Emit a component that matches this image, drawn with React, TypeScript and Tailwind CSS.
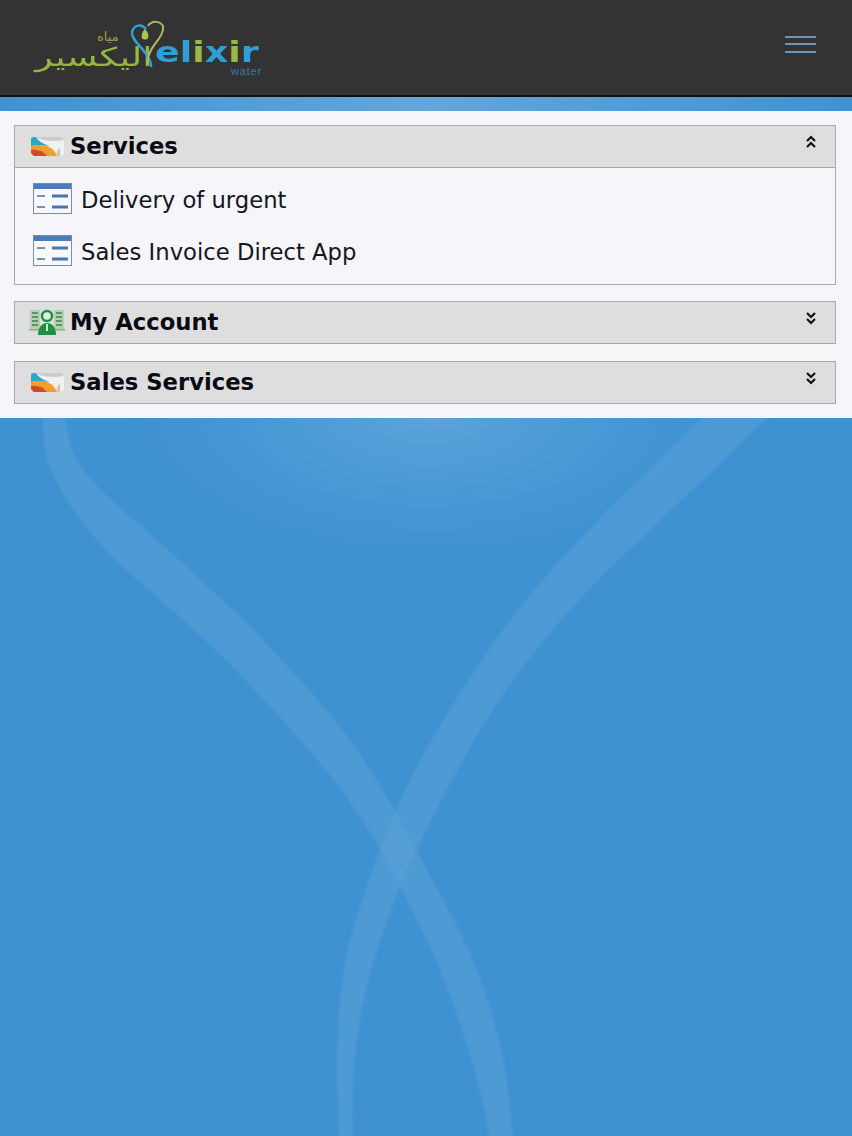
import React from "react";

// smooth closed shape through the two edges of a ribbon: [y, left x, right x]
function ribbonPath(rows: number[][]) {
  const pts = [...rows.map((r) => [r[1], r[0]]), ...[...rows].reverse().map((r) => [r[2], r[0]])];
  let d = `M${pts[0][0]} ${pts[0][1]}`;
  for (let i = 1; i < pts.length - 1; i++) {
    const mx = (pts[i][0] + pts[i + 1][0]) / 2;
    const my = (pts[i][1] + pts[i + 1][1]) / 2;
    d += ` Q${pts[i][0]} ${pts[i][1]} ${mx} ${my}`;
  }
  return d + ` L${pts[pts.length - 1][0]} ${pts[pts.length - 1][1]}Z`;
}

const leftRibbon = [
  [405, 42, 65], [419, 42, 65], [470, 46, 76], [549, 100, 168], [641, 209, 266], [734, 296, 348],
  [803, 353, 391], [873, 394, 429], [966, 440, 478], [1058, 472, 505], [1136, 490, 513], [1200, 498, 520], [1260, 500, 524],
];
const rightRibbon = [
  [405, 716, 780], [419, 701, 766], [503, 614, 679], [595, 527, 581], [688, 462, 505], [780, 408, 451],
  [873, 370, 405], [966, 342, 370], [1058, 336, 353], [1136, 339, 352], [1200, 342, 354], [1260, 344, 356],
];

function Card() {
  return (
    <svg width="34" height="22" viewBox="0 0 34 22">
      <path d="M3 2H32L34 4V19L31 21H5z" fill="#f0f1f2" />
      <path d="M3 2H32L34 5C24 7 14 6 7 3z" fill="#c9cdd0" />
      <path d="M1 4C1 2 3 2 6 2C8 6 13 9 20 11C12 10 5 10 1 11z" fill="#2fa6c8" />
      <path d="M1 11C8 9 16 10 21 13C25 16 26 19 27 21H4L1 18z" fill="#ef9f2e" />
      <path d="M1 15C7 14 13 16 17 21H4L1 18z" fill="#cf4a27" />
      <path d="M27 21C26 17 28 15 30 12V21z" fill="#dcc4a0" />
    </svg>
  );
}

function Person() {
  return (
    <svg width="36" height="28" viewBox="0 0 36 28">
      <rect x="1" y="2" width="10" height="19" fill="#b4d0b2" />
      <rect x="25" y="2" width="10" height="19" fill="#b4d0b2" />
      <path d="M3 5h6M3 9h6M3 13h6M3 17h6M27 5h6M27 9h6M27 13h6M27 17h6" stroke="#5b9565" strokeWidth="2" />
      <rect x="0" y="21" width="36" height="1.5" fill="#86b589" />
      <circle cx="18" cy="8" r="5" fill="#dfeedd" stroke="#1f8f45" strokeWidth="2.5" />
      <path d="M9 27c0-8 4-12 9-12s9 4 9 12z" fill="#1f8f45" />
      <path d="M17 16h2v7h-2z" fill="#d5e8d5" />
    </svg>
  );
}

function ListIcon() {
  return (
    <svg width="39" height="32" viewBox="0 0 39 32">
      <rect x="0.5" y="0.5" width="38" height="30" fill="#f6f8fb" stroke="#7d8ca0" />
      <rect x="1" y="1" width="37" height="5" fill="#4a7db8" />
      <path d="M4 13h8M4 24h8" stroke="#6f93c0" strokeWidth="2" />
      <path d="M19 13h16M19 24h16" stroke="#4a76ad" strokeWidth="3" />
    </svg>
  );
}

function Chevrons({ up }: { up?: boolean }) {
  return (
    <svg width="12" height="14" viewBox="0 0 12 14" fill="none" stroke="#111" strokeWidth="2.2">
      {up ? <path d="M2 6l4-4 4 4M2 12l4-4 4 4" /> : <path d="M2 2l4 4 4-4M2 8l4 4 4-4" />}
    </svg>
  );
}

function Logo() {
  return (
    <div className="relative h-[60px] w-[240px]">
      <span className="absolute left-[67px] top-[12px] font-['DejaVu_Sans',sans-serif] text-[13px] leading-none text-[#9a9a4a]" dir="rtl">مياه</span>
      <span className="absolute left-[5px] top-[26px] origin-left scale-x-[1.42] font-['DejaVu_Sans',sans-serif] text-[26px] leading-none text-[#97b63f]" dir="rtl">اليكسير</span>
      <svg className="absolute left-[96px] top-[-6px]" width="50" height="60" viewBox="0 0 50 60" fill="none">
        <path d="M20 17C16 12 8 12 6 20C5 27 14 33 20 42C24 48 25 50 25 55" stroke="#2f9fd6" strokeWidth="2.5" />
        <path d="M22 14C26 8 34 9 37 14C38 20 34 26 29 32C25 37 22 42 21 52" stroke="#b0b860" strokeWidth="2" />
        <path d="M19 17c3 3 4 6 3 9-1 2-5 2-6 0-1-3 0-6 3-9z" fill="#a9c44e" />
      </svg>
      <span className="absolute left-[125px] top-[23px] origin-left scale-x-[1.3] font-['DejaVu_Sans',sans-serif] text-[28px] font-bold leading-[24px] text-[#2f9fd6]">
        el<span className="text-[#9ab84a]">i</span>x<span className="text-[#9ab84a]">i</span>r
      </span>
      <span className="absolute left-[201px] top-[48px] font-['Liberation_Sans',sans-serif] text-[11px] leading-none tracking-[0.8px] text-[#2b7eb0]">water</span>
    </div>
  );
}

function Section({ title, icon, up, className, children }: { title: string; icon: React.ReactNode; up?: boolean; className?: string; children?: React.ReactNode }) {
  return (
    <div className={`border border-[#a9a9a9] ${className ?? ""}`}>
      <div className="flex h-[41px] items-center justify-between bg-[#dedede] pr-[18px]">
        <div className="flex items-center">
          <span className="flex w-[55px] justify-center pl-[9px]">{icon}</span>
          <span className="text-[22.7px] font-bold text-[#0a0a14]">{title}</span>
        </div>
        <span className="-mt-[10px]"><Chevrons up={up} /></span>
      </div>
      {children}
    </div>
  );
}

export default function App() {
  return (
    <div className="relative h-[1136px] w-[852px] overflow-hidden bg-[#3f92d2] font-['DejaVu_Sans',sans-serif]">
      {/* background ribbons */}
      <svg className="absolute inset-0" width="852" height="1136" viewBox="0 0 852 1136" fill="none">
        <defs>
          <radialGradient id="glow" cx="50%" cy="50%" r="50%">
            <stop offset="0%" stopColor="#62a6dc" stopOpacity="0.9" />
            <stop offset="55%" stopColor="#55a0d8" stopOpacity="0.45" />
            <stop offset="100%" stopColor="#3f92d2" stopOpacity="0" />
          </radialGradient>
        </defs>
        <ellipse cx="430" cy="410" rx="320" ry="160" fill="url(#glow)" />
        <g className="blur-[1px]">
          <path d={ribbonPath(leftRibbon)} fill="#5da1d8" fillOpacity="0.5" />
          <path d={ribbonPath(rightRibbon)} fill="#5da1d8" fillOpacity="0.5" />
        </g>
      </svg>

      <div className="relative flex flex-col">
        <header className="flex h-[97px] items-center justify-between border-b-2 border-[#111] bg-[#333333] pl-[30px] pr-[36px]">
          <Logo />
          <div className="-mt-[7px] flex w-[31px] flex-col gap-[5.5px]">
            <span className="h-[2px] bg-[#6f93b5]" />
            <span className="h-[2px] bg-[#6f93b5]" />
            <span className="h-[2px] bg-[#6f93b5]" />
          </div>
        </header>
        <div className="h-[14px] bg-gradient-to-r from-[#3f92d2] via-[#62a6dc] to-[#3f92d2]" />
        <main className="flex flex-col gap-[16px] bg-[#f6f6fa] pb-[14px] pl-[14px] pr-[16px] pt-[14px]">
          <Section title="Services" icon={<Card />} up>
            <div className="flex flex-col border-t border-[#a9a9a9] pl-[18px] pt-[15px]">
              {["Delivery of urgent", "Sales Invoice Direct App"].map((label) => (
                <div key={label} className="flex h-[52px] items-start gap-[10px] last:h-[49px]">
                  <ListIcon />
                  <span className="-ml-px text-[22.7px] leading-[34px] text-[#15151f]">{label}</span>
                </div>
              ))}
            </div>
          </Section>
          <Section title="My Account" icon={<Person />} />
          <Section title="Sales Services" icon={<Card />} className="mt-px" />
        </main>
      </div>
    </div>
  );
}
